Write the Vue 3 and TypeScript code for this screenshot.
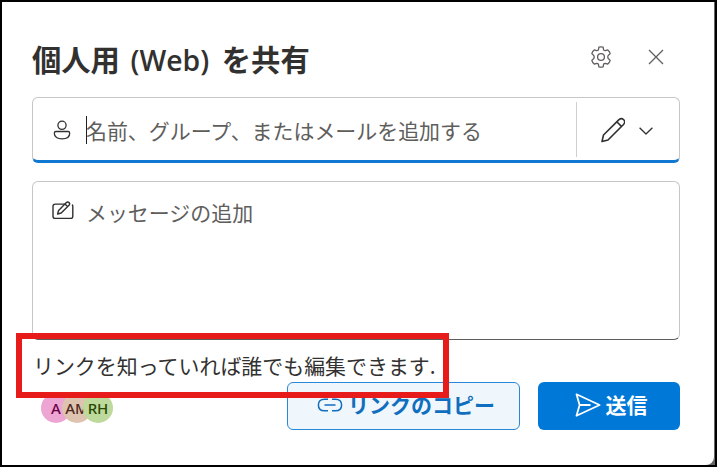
<script setup lang="ts">
import { ref, onMounted } from 'vue'

interface Person {
  initials: string;
  kind: string;
}

const recipient = ref('');
const message = ref('');
const people = ref<Person[]>([]);

// 共有済みのユーザー
const getPeople = () => {
  people.value = [
    { initials: 'A', kind: 'pink' },
    { initials: 'AM', kind: 'tan' },
    { initials: 'RH', kind: 'green' }
  ];
};

onMounted(() => {
  getPeople();
});
</script>

<template>
  <div class="window">
    <div class="dialog">
      <header class="header">
        <h1 class="title">個人用 <span class="latin">(Web)</span> を共有</h1>
        <button class="icon-btn" aria-label="設定">
          <svg width="22" height="22" viewBox="0 0 22 22">
            <path d="M8.9 1.2Q11 .6 13.1 1.2L13.6 3.8Q14.1 4.6 15.3 4.7L17.8 3.9Q19.6 5.5 20.2 7.6L18.2 9.5Q17.4 11 18.2 12.5L20.2 14.4Q19.6 16.5 17.8 18.1L15.3 17.3Q14.1 17.4 13.6 18.2L13.1 20.8Q11 21.4 8.9 20.8L8.4 18.2Q7.9 17.4 6.7 17.3L4.2 18.1Q2.4 16.5 1.8 14.4L3.8 12.5Q4.6 11 3.8 9.5L1.8 7.6Q2.4 5.5 4.2 3.9L6.7 4.7Q7.9 4.6 8.4 3.8Z" />
            <circle cx="11" cy="11" r="3.4" />
          </svg>
        </button>
        <button class="icon-btn close" aria-label="閉じる">
          <svg width="16" height="16" viewBox="0 0 16 16">
            <path d="M1 1L15 15M15 1L1 15" />
          </svg>
        </button>
      </header>

      <div class="recipient">
        <svg class="person" width="18" height="20" viewBox="0 0 18 20">
          <circle cx="9" cy="5.3" r="4.1" />
          <path d="M3 11.5H15Q16.7 11.5 16.7 13.2C16.7 17 13.4 18.8 9 18.8S1.3 17 1.3 13.2Q1.3 11.5 3 11.5Z" />
        </svg>
        <span class="caret"></span>
        <span class="placeholder">{{ recipient || '名前、グループ、またはメールを追加する' }}</span>
        <div class="permission">
          <svg width="24" height="26" viewBox="0 0 24 26">
            <path d="M1 24.5L2.5 18L18 2.6Q20.5 .5 22.7 2.7T22.5 7.5L7 23Z M15.8 4.8L20.4 9.4" />
          </svg>
          <svg class="chevron" width="14" height="8" viewBox="0 0 14 8">
            <path d="M.6 .8L7 7L13.4 .8" />
          </svg>
        </div>
      </div>

      <div class="message">
        <svg width="22" height="19" viewBox="0 0 22 19">
          <path d="M13 3.1H3.2Q1 3.1 1 5.3V15.2Q1 17.4 3.2 17.4H18.6Q20.8 17.4 20.8 15.2V5.3Q20.8 4.2 20.1 3.6" />
          <path d="M5.6 13L6.6 9.4L14.4 1.6Q15.7 .5 17 1.6T17 4.3L9.2 12Z M13 3L15.7 5.7" />
        </svg>
        <span class="placeholder">{{ message || 'メッセージの追加' }}</span>
      </div>

      <p class="link-note">リンクを知っていれば誰でも編集できます.</p>

      <footer class="footer">
        <div class="people">
          <span v-for="person in people" :key="person.initials" class="avatar" :class="person.kind">
            {{ person.initials }}
          </span>
        </div>
        <button class="btn copy">
          <svg width="26" height="14" viewBox="0 0 26 14">
            <path d="M11 1.2H7.5Q1.4 1.2 1.4 7T7.5 12.8H11M15 1.2H18.5Q24.6 1.2 24.6 7T18.5 12.8H15M7.5 7H18.5" />
          </svg>
          <span>リンクのコピー</span>
        </button>
        <button class="btn send">
          <svg width="26" height="24" viewBox="0 0 26 24">
            <path d="M1.5 1.3L24.6 12L1.5 22.7L4.6 12Z M4.6 12H15.5" />
          </svg>
          <span>送信</span>
        </button>
      </footer>
    </div>
    <div class="highlight"></div>
  </div>
</template>

<style>
body {
  margin: 0;
  overflow: hidden;
}
</style>

<style scoped>
.window {
  position: relative;
  box-sizing: border-box;
  width: 717px;
  height: 467px;
  border: 2px solid #000;
  background: #666;
  font-family: "Noto Sans CJK JP", sans-serif;
}

.dialog {
  box-sizing: border-box;
  width: 712px;
  height: 463px;
  padding: 33px 34px 0 30px;
  border-radius: 0 0 8px 0;
  background: #fff;
}

svg {
  display: block;
  flex: none;
  fill: none;
  stroke: currentColor;
  stroke-width: 1.3;
  stroke-linejoin: round;
}

button {
  padding: 0;
  font-family: inherit;
}

.header {
  display: flex;
  align-items: center;
  height: 44px;
}

.title {
  flex: 1;
  margin: 0;
  padding-top: 3px;
  color: #323130;
  font-size: 29.3px;
  font-weight: 700;
  line-height: 44px;
  white-space: nowrap;
}

.latin {
  margin: 0 6px 0 4px;
  font-family: "Open Sans", "Noto Sans", sans-serif;
  font-size: 28.3px;
  font-weight: 600;
}

.icon-btn {
  margin-right: 36px;
  border: 0;
  background: none;
  color: #605e5c;
}

.icon-btn.close {
  margin-right: 16.5px;
}

.recipient {
  display: flex;
  align-items: center;
  box-sizing: border-box;
  height: 66px;
  margin-top: 18px;
  padding-left: 20px;
  border: 1px solid #c8c6c4;
  border-bottom: 3px solid #1078d0;
  border-radius: 6px;
  color: #323130;
}

.person {
  margin-top: 2px;
}

.caret {
  width: 1px;
  height: 28px;
  margin: 2px -1px 0 15px;
  background: #201f1e;
}

.placeholder {
  color: #605e5c;
  font-size: 20.95px;
  line-height: 30px;
  white-space: nowrap;
}

.recipient .placeholder {
  flex: 1;
  padding-top: 1px;
}

.permission {
  display: flex;
  align-items: center;
  box-sizing: border-box;
  width: 103px;
  height: 55px;
  padding-left: 24px;
  border-left: 1px solid #d2d0ce;
}

.permission svg {
  margin-top: 2px;
  stroke-width: 1.6;
}

.permission .chevron {
  margin: 3px 0 0 14px;
  stroke-width: 1.3;
}

.message {
  display: flex;
  align-items: flex-start;
  gap: 12px;
  box-sizing: border-box;
  height: 159px;
  margin-top: 18px;
  padding: 15px 0 0 19px;
  border: 1px solid #c8c6c4;
  border-bottom-color: #605e5c;
  border-radius: 6px;
  color: #323130;
}

.message svg {
  margin-top: 4px;
  stroke-width: 1.4;
}

.link-note {
  margin: 10px 0 0 1px;
  color: #323130;
  font-size: 20.95px;
  line-height: 30px;
  white-space: nowrap;
}

.footer {
  display: flex;
  height: 48px;
  margin-top: 2px;
}

.people {
  display: flex;
  flex: 1;
  align-items: center;
  padding: 4px 0 0 9px;
}

.avatar {
  width: 30px;
  height: 30px;
  border-radius: 50%;
  font-family: "Noto Sans", sans-serif;
  font-size: 15px;
  font-weight: 500;
  line-height: 30px;
  text-align: center;
}

.avatar + .avatar {
  margin-left: -9px;
}

.pink {
  background: #eda5d3;
  color: #6b0047;
}

.tan {
  background: #dfc3b1;
  color: #4d291c;
}

.green {
  background: #bdd99b;
  color: #294903;
}

.btn {
  display: flex;
  align-items: center;
  justify-content: center;
  box-sizing: border-box;
  height: 48px;
  border-radius: 6px;
  font-size: 21px;
  font-weight: 700;
  white-space: nowrap;
}

.btn span {
  margin-top: -4px;
}

.copy {
  gap: 5px;
  width: 233px;
  padding-left: 5px;
  border: 1px solid #2b88d8;
  background: #eff6fc;
  color: #106ebe;
}

.copy svg {
  margin-top: -2px;
  stroke-width: 1.5;
}

.send {
  gap: 5px;
  width: 142px;
  margin-left: 18px;
  padding-left: 4px;
  border: 0;
  background: #0078d7;
  color: #fff;
}

.send svg {
  margin-top: -2px;
  stroke-width: 1.8;
}

.highlight {
  position: absolute;
  top: 331px;
  left: 14px;
  box-sizing: border-box;
  width: 433px;
  height: 65px;
  border: 6px solid #e81b1b;
}
</style>
